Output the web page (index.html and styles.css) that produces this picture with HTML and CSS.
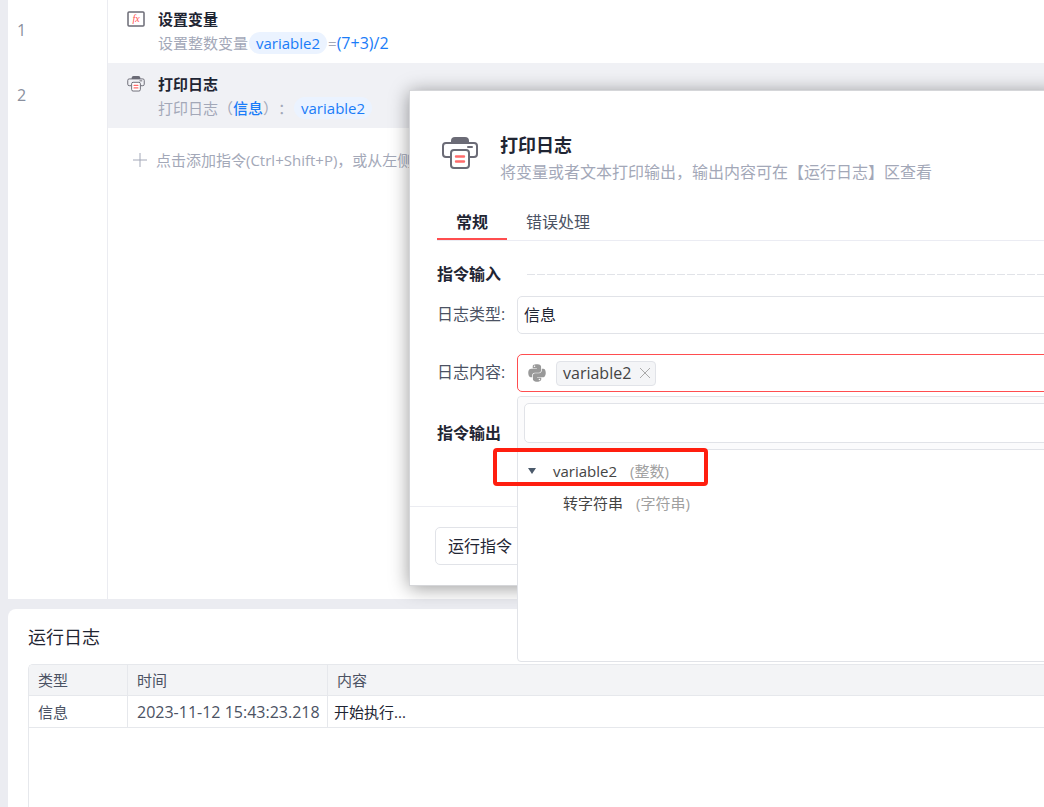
FILE: index.html
```html
<!DOCTYPE html>
<html lang="zh-CN">
<head>
    <meta charset="UTF-8">
    <meta name="viewport" content="width=device-width, initial-scale=1.0">
    <title>打印日志</title>
    <link rel="stylesheet" href="styles.css">
</head>

<body>
<svg class="sprite" aria-hidden="true">
    <symbol id="icon-printer" viewBox="0 0 36 33">
        <path d="M9 6V4a4 4 0 0 1 4-4h10a4 4 0 0 1 4 4v2z" fill="#6b6b76"/>
        <path d="M9 20H4a3 3 0 0 1-3-3V9a3 3 0 0 1 3-3h28a3 3 0 0 1 3 3v8a3 3 0 0 1-3 3h-5" fill="none" stroke="#6b6b76" stroke-width="2"/>
        <rect x="9" y="13" width="18" height="18" rx="3" fill="#fff" stroke="#6b6b76" stroke-width="2"/>
        <path d="M26 10h4" stroke="#6b6b76" stroke-width="2" stroke-linecap="round"/>
        <path d="M14 19.500h8M14 24.500h8" stroke="#ff6b6b" stroke-width="2.400" stroke-linecap="round"/>
    </symbol>
</svg>

<main class="editor">
    <ol class="line-numbers">
        <li>1</li>
        <li>2</li>
    </ol>
    <div class="steps">
        <div class="step">
            <svg class="step-icon" viewBox="0 0 18 16">
                <rect x="1" y="1" width="16" height="14" rx="1" fill="#fff" stroke="#6b6b76" stroke-width="1.500"/>
                <text x="9" y="11" text-anchor="middle">fx</text>
            </svg>
            <div>
                <h2>设置变量</h2>
                <p>设置整数变量<span class="pill">variable2</span>=<span class="value formula">(7+3)/2</span></p>
            </div>
        </div>
        <div class="step active">
            <svg class="step-icon"><use href="#icon-printer"/></svg>
            <div>
                <h2>打印日志</h2>
                <p>打印日志（<span class="value strong">信息</span>）：<span class="pill">variable2</span></p>
            </div>
        </div>
        <button class="add-step" type="button">
            <svg viewBox="0 0 14 14"><path d="M7 0v14M0 7h14" stroke="#a3a8b8"/></svg>
            点击添加指令(Ctrl+Shift+P)，或从左侧
        </button>
    </div>
</main>

<section class="log">
    <h2>运行日志</h2>
    <div class="log-table">
        <table>
            <thead>
            <tr>
                <th class="col-type">类型</th>
                <th class="col-time">时间</th>
                <th>内容</th>
            </tr>
            </thead>
            <tbody>
            <tr>
                <td>信息</td>
                <td class="time">2023-11-12 15:43:23.218</td>
                <td class="content">开始执行...</td>
            </tr>
            </tbody>
        </table>
    </div>
</section>

<form class="dialog" role="dialog" aria-labelledby="dialogTitle">
    <div class="dialog-body">
        <header>
            <svg class="dialog-icon"><use href="#icon-printer"/></svg>
            <div>
                <h1 id="dialogTitle">打印日志</h1>
                <p>将变量或者文本打印输出，输出内容可在【运行日志】区查看</p>
            </div>
        </header>

        <nav class="tabs">
            <button class="tab selected" type="button">常规</button>
            <button class="tab" type="button">错误处理</button>
        </nav>

        <h3 class="section-title">指令输入</h3>
        <div class="field">
            <label for="logType">日志类型:</label>
            <select id="logType">
                <option>信息</option>
            </select>
        </div>
        <div class="field">
            <span class="label" id="contentLabel">日志内容:</span>
            <div class="token-box" role="group" aria-labelledby="contentLabel">
                <svg class="python" viewBox="0 0 448 512"><path fill="#999" d="M439.8 200.5c-7.7-30.9-22.3-54.2-53.4-54.2h-40.1v47.4c0 36.8-31.2 67.8-66.8 67.8H172.7c-29.2 0-53.4 25-53.4 54.3v101.8c0 29 25.2 46 53.4 54.3 33.8 9.9 66.3 11.7 106.8 0 26.9-7.8 53.4-23.5 53.4-54.3v-40.7H226.2v-13.6h160.2c31.1 0 42.6-21.7 53.4-54.2 11.2-33.5 10.7-65.7 0-108.600zM286.2 404c11.1 0 20.1 9.1 20.1 20.3 0 11.3-9 20.4-20.1 20.4-11 0-20.1-9.2-20.1-20.4.1-11.3 9.1-20.3 20.1-20.300zM167.8 248.1h106.8c29.7 0 53.4-24.5 53.4-54.3V91.9c0-29-24.4-50.7-53.4-55.6-35.8-5.9-74.7-5.6-106.8.1-45.2 8-53.4 24.7-53.4 55.6v40.7h106.9v13.6h-147c-31.1 0-58.3 18.7-66.8 54.2-9.8 40.7-10.2 66.1 0 108.6 7.6 31.6 25.7 54.2 56.8 54.2H101v-48.8c0-35.3 30.5-66.4 66.8-66.400zm-6.7-142.600c-11.1 0-20.1-9.1-20.1-20.3.1-11.3 9-20.4 20.1-20.4 11 0 20.1 9.2 20.1 20.4s-9 20.3-20.1 20.300z"/></svg>
                <span class="token">variable2
                    <button type="button" aria-label="移除"><svg viewBox="0 0 10 10"><path d="M0 0l10 10M10 0l-10 10" stroke="#aaa"/></svg></button>
                </span>
                <div class="dropdown">
                    <div class="dropdown-search">
                        <input type="text" aria-label="搜索变量">
                    </div>
                    <ul>
                        <li class="marked"><span class="caret"></span>variable2<span class="kind">(整数)</span></li>
                        <li class="child">转字符串<span class="kind">(字符串)</span></li>
                    </ul>
                </div>
            </div>
        </div>

        <h3 class="section-title output">指令输出</h3>
    </div>
    <footer>
        <button class="run-button" type="button">运行指令</button>
    </footer>
</form>
</body>
</html>
```

FILE: styles.css
```css
*,
*::before,
*::after {
    box-sizing: border-box;
}

body {
    display: flex;
    flex-direction: column;
    gap: 10px;
    height: 100vh;
    margin: 0;
    padding-left: 8px;
    background-color: #ebecf1;
    color: #1f2533;
    font-family: "Open Sans", "Noto Sans CJK SC", sans-serif;
    font-size: 15px;
    line-height: 24px;
    text-spacing-trim: space-all;
    position: relative;
    overflow: hidden;
}

h1, h2, h3, p, ol, ul {
    margin: 0;
    padding: 0;
    list-style: none;
}

button, input, select {
    font: inherit;
    color: inherit;
    background: none;
    border: none;
    padding: 0;
}

.sprite {
    display: none;
}

/* steps */
.editor {
    display: flex;
    flex: 1;
    min-height: 0;
    overflow: hidden;
    background-color: #fff;
}

.line-numbers {
    width: 100px;
    border-right: 1px solid #ebecf1;
    color: #8a909e;
    font-size: 16px;
}

.line-numbers li {
    height: 65px;
    padding-left: 9px;
    line-height: 60px;
}

.steps {
    flex: 1;
    margin-top: -2px;
}

.step {
    display: flex;
    gap: 13px;
    height: 65px;
    padding: 9px 19px;
}

.step.active {
    background-color: #f0f1f5;
}

.step-icon {
    width: 18px;
    height: 16px;
    margin-top: 4px;
}

.step-icon text {
    font: italic 10px "Liberation Serif", serif;
    fill: #ff5050;
}

.step h2 {
    font-size: 15px;
}

.step p {
    color: #a3a8b8;
    white-space: nowrap;
}

.pill {
    display: inline-block;
    margin: 0 1px;
    padding: 0 7px;
    border-radius: 11px;
    background-color: #ebf3ff;
    color: #1a7cf8;
    line-height: 22px;
}

.value {
    color: #1a7cf8;
}

.formula {
    font-size: 16px;
}

.strong {
    font-weight: 500;
}

.add-step {
    display: flex;
    align-items: center;
    gap: 9px;
    margin: 20px 25px;
    color: #a3a8b8;
    white-space: nowrap;
}

.add-step svg {
    width: 14px;
    height: 14px;
}

/* run log */
.log {
    display: flex;
    flex-direction: column;
    height: 198px;
    padding: 14px 0 0 20px;
    border-top-left-radius: 8px;
    background-color: #fff;
}

.log h2 {
    margin-bottom: 13px;
    font-size: 18px;
    font-weight: 400;
    line-height: 28px;
}

.log-table {
    flex: 1;
    border: 1px solid #e6e8ec;
    border-width: 1px 0 0 1px;
    border-top-left-radius: 5px;
    overflow: hidden;
}

table {
    width: 100%;
    border-spacing: 0;
    table-layout: fixed;
}

th, td {
    height: 31px;
    padding: 0 9px;
    border: 1px solid #e6e8ec;
    border-width: 0 1px 1px 0;
    color: #4b5263;
    font-weight: 400;
    text-align: left;
    white-space: nowrap;
}

th:last-child,
td:last-child {
    border-right: none;
}

th {
    background-color: #f3f4f6;
}

td {
    height: 32px;
}

.col-type {
    width: 99px;
}

.col-time {
    width: 200px;
}

td.time {
    font-size: 16px;
}

td.content {
    padding-left: 6px;
    color: #1f2533;
}

/* dialog */
.dialog {
    position: absolute;
    top: 90px;
    left: 409px;
    right: -16px;
    border: 1px solid #d5d6d9;
    background-color: #fff;
    box-shadow: 0 2px 18px rgba(0, 0, 0, 0.4);
    font-size: 16px;
}

.dialog-body {
    padding: 42px 0 61px 27px;
}

.dialog header {
    display: flex;
    gap: 22px;
    padding-left: 5px;
}

.dialog-icon {
    width: 36px;
    height: 33px;
    margin-top: 4px;
}

.dialog h1 {
    font-size: 18px;
    line-height: 24px;
}

.dialog header p {
    margin-top: 3px;
    color: #a3a8b8;
    white-space: nowrap;
}

.tabs {
    display: flex;
    margin-top: 22px;
    border-bottom: 1px solid #ebecf3;
}

.tab {
    padding: 0 19px;
    border-bottom: 2px solid transparent;
    color: #4b5263;
    line-height: 32px;
}

.tab.selected {
    border-color: #ff4d4f;
    color: #1f2533;
    font-weight: 700;
}

.section-title {
    display: flex;
    align-items: center;
    gap: 26px;
    margin: 21px 0 10px;
    font-size: 16px;
}

.section-title::after {
    content: "";
    flex: 1;
    height: 1px;
    background: repeating-linear-gradient(90deg, #e1e3e8 0 8px, transparent 8px 10px);
}

.section-title.output {
    margin: 29px 0 0;
}

.field {
    display: grid;
    grid-template-columns: 80px 1fr;
    align-items: center;
}

.field + .field {
    margin-top: 20px;
}

.field label,
.label {
    padding-bottom: 3px;
    color: #4b5263;
}

select,
.token-box {
    height: 38px;
    border: 1px solid #e1e3e8;
    border-radius: 5px;
    background-color: #fff;
}

select {
    width: 100%;
    padding: 0 6px;
    appearance: none;
}

.token-box {
    display: flex;
    align-items: center;
    gap: 10px;
    padding-left: 10px;
    border-color: #ff4d4f;
    position: relative;
}

.python {
    width: 18px;
    height: 20px;
}

.token {
    display: flex;
    align-items: center;
    gap: 9px;
    height: 25px;
    padding: 0 5px 0 6px;
    border: 1px solid #e1e3e8;
    border-radius: 4px;
    background-color: #f4f5f7;
    color: #444;
}

.token button {
    display: flex;
}

.token svg {
    width: 10px;
    height: 10px;
}

.dropdown {
    position: absolute;
    top: 41px;
    left: -1px;
    right: 0;
    border: 1px solid #e1e3e8;
    border-radius: 4px;
    background-color: #fff;
    color: #444;
    font-size: 15px;
}

.dropdown-search {
    padding: 6px;
    border-bottom: 1px solid #e1e3e8;
    border-radius: 4px 4px 0 0;
    background-color: #fbfbfc;
}

.dropdown-search input {
    display: block;
    width: 100%;
    height: 40px;
    padding: 0 8px;
    border: 1px solid #e1e3e8;
    border-radius: 5px;
    background-color: #fff;
}

.dropdown ul {
    min-height: 211px;
    padding-top: 5px;
}

.dropdown li {
    display: flex;
    align-items: center;
    height: 32px;
    padding-left: 10px;
    position: relative;
}

.dropdown li.child {
    padding-left: 45px;
}

.caret {
    margin-right: 17px;
    border: 4px solid transparent;
    border-top: 6px solid #4b5a6b;
    border-bottom: 0;
}

.kind {
    margin-left: 13px;
    color: #a0a0a0;
}

/* red frame over the variable row */
.marked::after {
    content: "";
    position: absolute;
    top: -7px;
    left: -25px;
    width: 215px;
    height: 38px;
    border: 4px solid #ff1e0f;
    border-radius: 4px;
}

.dialog footer {
    padding: 20px 25px;
    border-top: 1px solid #ebecf1;
}

.run-button {
    height: 38px;
    padding: 0 12px;
    border: 1px solid #e1e3e8;
    border-radius: 5px;
}
```
